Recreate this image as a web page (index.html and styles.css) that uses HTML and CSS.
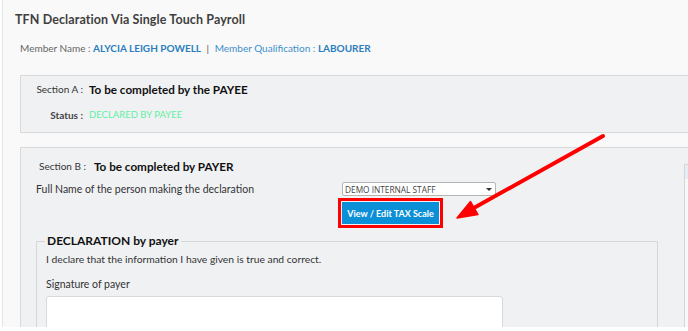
FILE: index.html
```html
<!DOCTYPE html>
<html>
<head>
<meta charset="utf-8">
<link rel="stylesheet" href="styles.css">
</head>
<body>
<div class="page">
  <h1 class="title">TFN Declaration Via Single Touch Payroll</h1>
  <div class="member">
    <span class="m-label">Member Name :</span>
    <span class="m-value">ALYCIA LEIGH POWELL</span>
    <span class="m-sep">|</span>
    <span class="m-label blue">Member Qualification :</span>
    <span class="m-value">LABOURER</span>
  </div>

  <div class="box box-a">
    <div class="kv">
      <span class="k">Section A :</span>
      <span class="v strong">To be completed by the PAYEE</span>
      <span class="k status-k">Status :</span>
      <span class="v green">DECLARED BY PAYEE</span>
    </div>
  </div>

  <div class="box box-b">
    <div class="col-left">
      <div class="kv kv-b">
        <span class="k">Section B :</span>
        <span class="v strong">To be completed by PAYER</span>
      </div>
      <div class="row">
        <div class="row-label">Full Name of the person making the declaration</div>
        <div class="controls">
          <div class="select"><span>DEMO INTERNAL STAFF</span><span class="caret"></span></div>
          <button class="btn">View / Edit TAX Scale</button>
        </div>
      </div>
      <fieldset class="decl">
        <legend>DECLARATION by payer</legend>
        <p class="decl-text">I declare that the information I have given is true and correct.</p>
        <p class="sig-label">Signature of payer</p>
        <div class="sig-box"></div>
      </fieldset>
    </div>
    <div class="col-right">
      <div class="panel-head"></div>
    </div>
  </div>

  <svg class="arrow" width="688" height="331" viewBox="0 0 688 331">
    <line x1="603" y1="136" x2="472" y2="209" stroke="#ff0000" stroke-width="4" stroke-linecap="round"/>
    <polygon points="457,218 470.5,201.5 478,214.5" fill="#ff0000" stroke="#ff0000" stroke-width="1.5" stroke-linejoin="round"/>
  </svg>
</div>
</body>
</html>
```

FILE: styles.css
```css
html, body {
  margin: 0;
  padding: 0;
  background: #ffffff;
  overflow: hidden;
}
body {
  font-family: Lato, "Open Sans", sans-serif;
  width: 688px;
  height: 331px;
}
.page {
  position: relative;
  box-sizing: border-box;
  height: 327px;
  width: 760px;
  margin-left: 2px;
  border-left: 1px solid #e6e6e6;
  background: #f9f9f9;
  padding-top: 12px;
  overflow: hidden;
}
.title {
  margin: 0 0 0 12px;
  font-size: 12.5px;
  line-height: 16px;
  font-weight: 700;
  color: #3f3f3f;
  letter-spacing: 0.1px;
}
.member {
  margin: 12px 0 0 17px;
  font-size: 10px;
  line-height: 16px;
  color: #666;
}
.m-label { color: #666; }
.m-label.blue { color: #3d8fcc; }
.m-value { color: #2b7dc0; font-weight: 700; }
.m-sep { color: #555; margin: 0 3px; }

.box {
  margin-left: 17px;
  border: 1px solid #d9d9d9;
  background: #f0f1f3;
}
.box-a {
  margin-top: 19px;
  height: 58px;
  box-sizing: border-box;
  padding: 6px 0 0 14px;
}
.kv {
  display: grid;
  grid-template-columns: 48px auto;
  column-gap: 6px;
  row-gap: 12px;
  align-items: center;
  font-size: 10px;
  line-height: 14px;
}
.k { text-align: right; color: #333; white-space: nowrap; }
.status-k { font-weight: 700; color: #444; }
.v { white-space: nowrap; }
.strong { font-weight: 700; color: #111; font-size: 11.7px; }
.green { color: #5ff0a4; font-size: 9.5px; }

.box-b {
  margin-top: 14px;
  display: flex;
  align-items: flex-start;
  height: 200px;
}
.col-left {
  width: 622px;
  padding: 11px 15px 0 15px;
  flex: none;
}
.kv-b {
  grid-template-columns: 48px auto;
  column-gap: 8px;
  padding-left: 2px;
}
.row {
  margin-top: 9px;
  display: flex;
  align-items: flex-start;
}
.row-label {
  width: 306px;
  flex: none;
  font-size: 10.5px;
  line-height: 14px;
  color: #333;
}
.controls {
  display: flex;
  flex-direction: column;
  align-items: flex-start;
}
.select {
  box-sizing: border-box;
  width: 154px;
  height: 14px;
  border: 1px solid #b5b5b5;
  border-radius: 2px;
  background: #fff;
  display: flex;
  align-items: center;
  justify-content: space-between;
  padding: 0 3px 0 2px;
  font-family: "Open Sans", sans-serif;
  font-size: 8.3px;
  color: #444;
}
.caret {
  width: 0;
  height: 0;
  border-left: 3px solid transparent;
  border-right: 3px solid transparent;
  border-top: 3.5px solid #333;
}
.btn {
  margin-top: 6px;
  width: 97px;
  height: 22px;
  border: none;
  background: #0b8fd7;
  color: #fff;
  font-family: Lato, sans-serif;
  font-weight: 700;
  font-size: 9px;
  padding: 0;
  outline: 3px solid #ff0000;
  outline-offset: 1px;
}
.decl {
  margin: 9px 0 0 0;
  padding: 0 10px 0 9px;
  border: 1px solid #d6d6d6;
  border-radius: 1px;
  min-width: 0;
}
.decl legend {
  padding: 0 2px;
  margin-left: -1px;
  font-size: 12px;
  line-height: 16px;
  font-weight: 700;
  color: #111;
}
.decl-text {
  margin: 3px 0 0 0;
  font-size: 10.3px;
  line-height: 14px;
  color: #333;
}
.sig-label {
  margin: 11px 0 0 0;
  font-size: 10.5px;
  line-height: 14px;
  color: #333;
}
.sig-box {
  margin-top: 5px;
  width: 457px;
  height: 60px;
  box-sizing: border-box;
  background: #fff;
  border: 1px solid #d9d9d9;
  border-radius: 3px;
}
.col-right {
  margin: 16px 0 0 11px;
  width: 60px;
  height: 170px;
  border-left: 1px solid #d6d6d6;
  border-top: 1px solid #d6d6d6;
  background: #f7f8fa;
}
.panel-head {
  height: 14px;
  background: #e3edf8;
}
.arrow {
  position: absolute;
  left: -3px;
  top: 0;
  pointer-events: none;
}
```
